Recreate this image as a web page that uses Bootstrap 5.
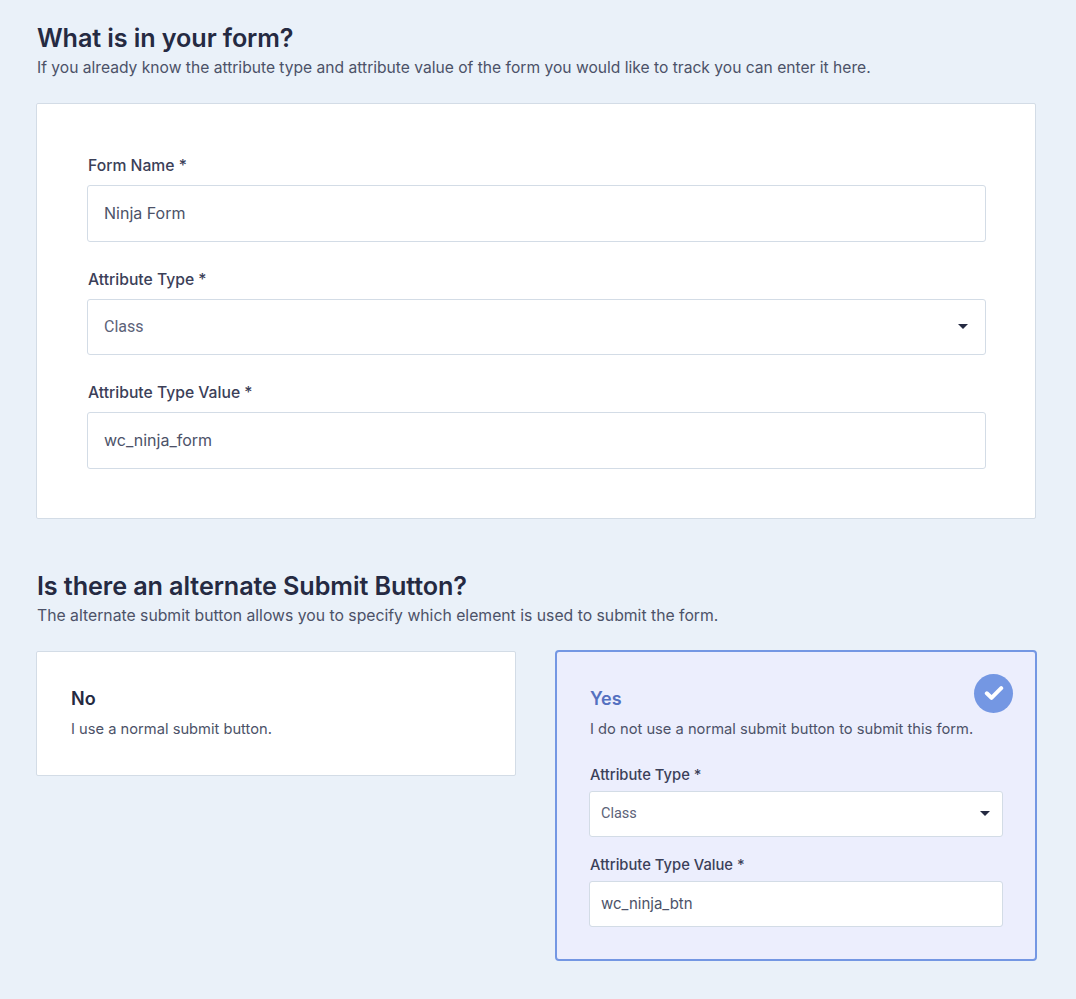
<!DOCTYPE html>
<html lang="en">
<head>
<meta charset="utf-8">
<title>Form</title>
<link rel="stylesheet" href="https://cdn.jsdelivr.net/npm/bootstrap@5.3.0/dist/css/bootstrap.min.css">
<style>
body{background:#eaf1f9;font-family:Inter,"Liberation Sans",sans-serif;color:#4c5268;}
.page-wrap{width:1000px;margin-left:36px;padding-top:21px;}
.sec-title{font-size:25.2px;line-height:34px;font-weight:600;color:#252a42;margin:0 0 0 1px;letter-spacing:-.1px;}
.sec-sub{font-size:15.62px;line-height:24px;margin:1px 0 23px 1px;color:#4c5268;}
.sec-sub-alt{font-size:15.75px;}
.panel{background:#fff;border:1px solid #d3dce6;border-radius:2px;}
.panel-main{padding:49px 49px 49px 50px;margin-bottom:50px;}
.fld-label{display:block;font-size:15.7px;line-height:22px;font-weight:500;color:#3b4058;padding-top:2px;margin:0 0 8px 1px;}
.fld-input.form-control,.fld-input.form-select{height:56.6px;border:1px solid #d3dce6;border-radius:3px;padding:0 16px;font-size:16px;color:#4c5268;box-shadow:none;}
.fld-input.form-select{font-family:Roboto,sans-serif;color:#5c6278;background-position:right 17px center;background-size:10px 5px;background-image:url("data:image/svg+xml,%3Csvg xmlns='http://www.w3.org/2000/svg' viewBox='0 0 10 5'%3E%3Cpath d='M0 0h10L5 5z' fill='%23252a42'/%3E%3C/svg%3E");}
.fld-group{margin-bottom:25px;}
.fld-group-last{margin-bottom:0;}
.choice-row{gap:39px;align-items:flex-start;}
.choice{flex:none;width:480px;padding:35px 34px;position:relative;}
.choice-on{width:482px;background:#eceefd;border:2px solid #7497e3;border-radius:4px;padding:35px 32px 32px 32px;margin-top:-1px;}
.choice-title{font-size:18px;line-height:24px;font-weight:600;color:#252a42;margin:0 0 7px;}
.choice-on .choice-title{color:#5470c0;margin-left:1px;}
.choice-text{font-size:14.7px;line-height:22px;margin:0;color:#4c5268;}
.choice-on .choice-text{margin:0 0 25px 1px;}
.choice-on .fld-label{font-size:14.75px;line-height:20px;padding-top:0;margin:0 0 6px 1px;}
.choice-on .fld-input.form-control,.choice-on .fld-input.form-select{height:46px;padding:0 11px;font-size:15px;}
.choice-on .fld-input.form-select{background-position:right 12px center;font-size:14.5px;padding-top:1px;}
.choice-on .fld-group{margin-bottom:18px;}
.choice-on .fld-group-last{margin-bottom:0;}
.check-badge{position:absolute;top:22px;right:22px;width:39px;height:39px;border-radius:50%;background:#7497e3;}
</style>
</head>
<body>
<div class="page-wrap">
  <h2 class="sec-title">What is in your form?</h2>
  <p class="sec-sub">If you already know the attribute type and attribute value of the form you would like to track you can enter it here.</p>
  <div class="panel panel-main">
    <div class="fld-group">
      <label class="fld-label" for="a1">Form Name *</label>
      <input id="a1" class="form-control fld-input" value="Ninja Form">
    </div>
    <div class="fld-group">
      <label class="fld-label" for="a2">Attribute Type *</label>
      <select id="a2" class="form-select fld-input"><option>Class</option></select>
    </div>
    <div class="fld-group fld-group-last">
      <label class="fld-label" for="a3">Attribute Type Value *</label>
      <input id="a3" class="form-control fld-input" value="wc_ninja_form">
    </div>
  </div>
  <h2 class="sec-title">Is there an alternate Submit Button?</h2>
  <p class="sec-sub sec-sub-alt">The alternate submit button allows you to specify which element is used to submit the form.</p>
  <div class="d-flex choice-row">
    <div class="panel choice">
      <h3 class="choice-title">No</h3>
      <p class="choice-text">I use a normal submit button.</p>
    </div>
    <div class="choice choice-on">
      <span class="check-badge d-flex align-items-center justify-content-center">
        <svg width="20" height="16" viewBox="0 0 20 16" aria-hidden="true"><path d="M2.800 8.300 7.500 12.800 17.200 3.200" fill="none" stroke="#fff" stroke-width="4" stroke-linecap="round" stroke-linejoin="round"/></svg>
      </span>
      <h3 class="choice-title">Yes</h3>
      <p class="choice-text">I do not use a normal submit button to submit this form.</p>
      <div class="fld-group">
        <label class="fld-label" for="b1">Attribute Type *</label>
        <select id="b1" class="form-select fld-input"><option>Class</option></select>
      </div>
      <div class="fld-group fld-group-last">
        <label class="fld-label" for="b2">Attribute Type Value *</label>
        <input id="b2" class="form-control fld-input" value="wc_ninja_btn">
      </div>
    </div>
  </div>
</div>
<script src="https://cdn.jsdelivr.net/npm/bootstrap@5.3.0/dist/js/bootstrap.bundle.min.js"></script>
</body>
</html>
